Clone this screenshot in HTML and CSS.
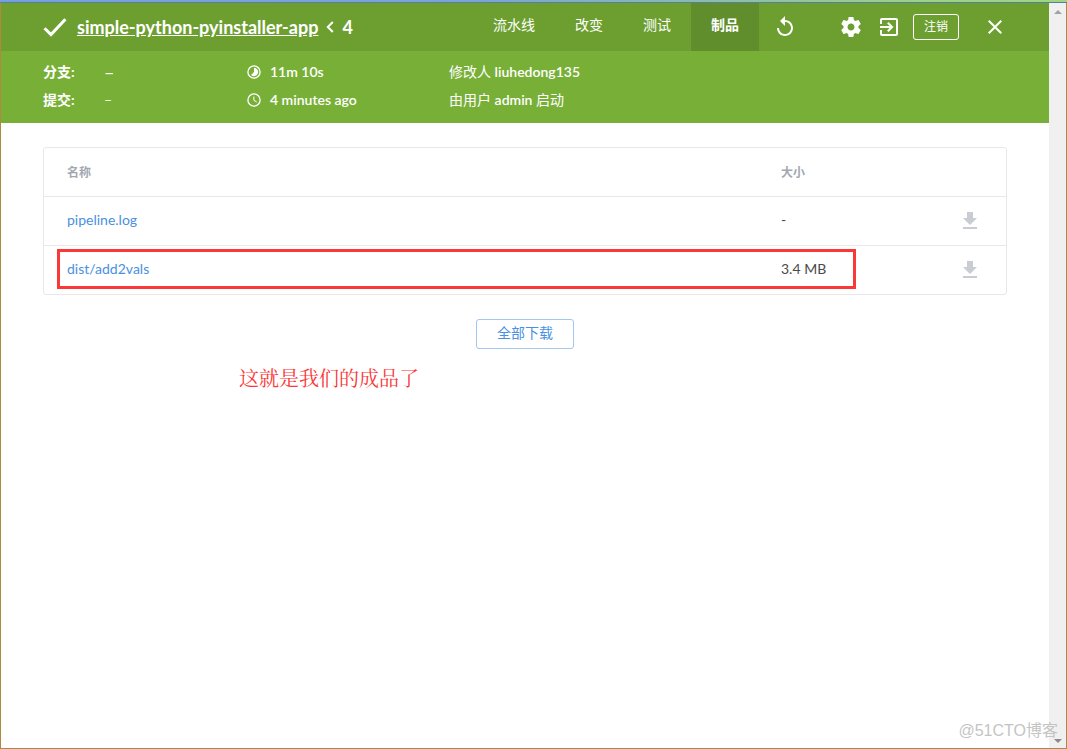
FILE: index.html
```html
<!DOCTYPE html>
<html lang="zh-CN">
<head>
<meta charset="utf-8">
<title>simple-python-pyinstaller-app</title>
<link rel="stylesheet" href="styles.css">
</head>
<body>
<div class="titlebar"></div>
<div class="window">
  <div class="page">
    <header class="topbar">
      <svg class="status-icon" viewBox="0 0 24 20" aria-hidden="true"><path d="M1.5 11.2L8 17.6L22.4 2.2" fill="none" stroke="#fff" stroke-width="3"/></svg>
      <h1 class="title"><a href="#">simple-python-pyinstaller-app</a>
        <svg class="chevron" viewBox="0 0 8 12" aria-hidden="true"><path d="M6.8 1L1.8 6L6.8 11" fill="none" stroke="#fff" stroke-width="2"/></svg>
        <span>4</span></h1>
      <nav class="tabs">
        <a href="#">流水线</a>
        <a href="#">改变</a>
        <a href="#">测试</a>
        <a href="#" class="active">制品</a>
      </nav>
      <button class="icon-button rerun" aria-label="Rerun"><svg viewBox="0 0 24 24"><path d="M12 5V1L7 6l5 5V7c3.31 0 6 2.69 6 6s-2.690 6-6 6-6-2.690-6-6H4c0 4.420 3.580 8 8 8s8-3.580 8-8-3.580-8-8-8z"/></svg></button>
      <button class="icon-button settings" aria-label="Settings"><svg viewBox="0 0 24 24"><path d="M19.430 12.980c.04-.32.07-.64.07-.98s-.03-.66-.07-.98l2.110-1.650c.19-.15.24-.42.12-.64l-2-3.460c-.12-.22-.39-.3-.61-.22l-2.490 1c-.52-.4-1.080-.73-1.690-.98l-.38-2.650C14.460 2.180 14.250 2 14 2h-4c-.25 0-.46.18-.49.42l-.38 2.650c-.61.25-1.170.59-1.690.98l-2.490-1c-.23-.09-.49 0-.61.22l-2 3.460c-.13.22-.07.49.12.64l2.110 1.650c-.04.32-.07.65-.07.98s.03.66.07.98l-2.110 1.650c-.19.15-.24.42-.12.64l2 3.460c.12.22.39.3.61.22l2.490-1c.52.4 1.080.73 1.690.98l.38 2.650c.03.24.24.42.49.42h4c.25 0 .46-.18.49-.42l.38-2.650c.61-.25 1.170-.59 1.690-.98l2.490 1c.23.09.49 0 .61-.22l2-3.460c.12-.22.07-.49-.12-.64l-2.110-1.650zM12 15.500c-1.930 0-3.500-1.570-3.500-3.500s1.570-3.500 3.500-3.500 3.500 1.570 3.500 3.500-1.570 3.500-3.500 3.500z"/></svg></button>
      <button class="icon-button" aria-label="Go to classic"><svg viewBox="0 0 24 24"><path d="M10.090 15.590L11.500 17l5-5-5-5-1.410 1.410L12.670 11H3v2h9.670l-2.580 2.590zM19 3H5c-1.110 0-2 .9-2 2v4h2V5h14v14H5v-4H3v4c0 1.100.89 2 2 2h14c1.100 0 2-.9 2-2V5c0-1.100-.9-2-2-2z"/></svg></button>
      <button class="logout">注销</button>
      <button class="icon-button close" aria-label="Close"><svg viewBox="0 0 24 24"><path d="M19 6.410L17.590 5 12 10.590 6.410 5 5 6.410 10.590 12 5 17.590 6.410 19 12 13.410 17.590 19 19 17.590 13.410 12z"/></svg></button>
    </header>
    <section class="details">
      <dl class="refs">
        <dt>分支:</dt><dd class="branch">–</dd>
        <dt>提交:</dt><dd>–</dd>
      </dl>
      <div class="times">
        <div class="time"><svg viewBox="0 0 14 14" aria-hidden="true"><circle cx="7" cy="7" r="6.100" fill="none" stroke="#fff" stroke-width="1.300"/><path d="M7 2.800A4.200 4.200 0 1 1 4 10L7 7z" fill="#fff"/></svg>11m 10s</div>
        <div class="time"><svg viewBox="0 0 14 14" aria-hidden="true"><circle cx="7" cy="7" r="6.100" fill="none" stroke="#fff" stroke-width="1.300"/><path d="M6.900 3.500V7.300L9.800 9.100" fill="none" stroke="#fff"/></svg>4 minutes ago</div>
      </div>
      <div class="causes">
        <div>修改人 <b>liuhedong135</b></div>
        <div>由用户 <b>admin</b> 启动</div>
      </div>
    </section>
    <main class="content">
      <div class="card">
        <table class="artifacts">
          <colgroup><col><col class="col-size"><col class="col-action"></colgroup>
          <thead><tr><th>名称</th><th>大小</th><th></th></tr></thead>
          <tbody>
            <tr><td><a href="#">pipeline.log</a></td><td>-</td><td class="action"><a class="download" href="#" aria-label="下载 pipeline.log"><svg viewBox="0 0 24 24"><path d="M19 9h-4V3H9v6H5l7 7 7-7zM5 18v2h14v-2H5z"/></svg></a></td></tr>
            <tr><td><a href="#">dist/add2vals</a></td><td>3.4 MB</td><td class="action"><a class="download" href="#" aria-label="下载 dist/add2vals"><svg viewBox="0 0 24 24"><path d="M19 9h-4V3H9v6H5l7 7 7-7zM5 18v2h14v-2H5z"/></svg></a></td></tr>
          </tbody>
        </table>
        <div class="highlight"></div>
      </div>
      <button class="download-all">全部下载</button>
      <p class="note">这就是我们的成品了</p>
    </main>
  </div>
  <div class="scrollbar"><span class="arrow up"></span><span class="arrow down"></span></div>
  <div class="watermark">@51CTO博客</div>
</div>
</body>
</html>
```
FILE: styles.css
```css
* { box-sizing: border-box; }
body {
  margin: 0;
  min-height: 100vh;
  display: flex;
  flex-direction: column;
  background: #fff;
  color: #4a4a4a;
  font: 14px/20px Lato, "Noto Sans CJK SC", sans-serif;
}
button { font: inherit; cursor: pointer; }
.titlebar {
  height: 3px;
  background: linear-gradient(90deg, #74a0e0, #7aa4d8 45%, #9ad08c 85%, #9fd685);
  border-bottom: 1px solid #5a7f94;
}
.window {
  position: relative;
  flex: 1;
  display: flex;
  border: solid #b08a3c;
  border-width: 0 1px 1px;
}
.page { flex: 1; min-width: 0; }

.topbar {
  display: flex;
  align-items: center;
  height: 48px;
  padding: 0 42px;
  background: #6d9f30;
  color: #fff;
}
.status-icon { width: 24px; height: 20px; margin-right: 10px; }
.title {
  display: flex;
  align-items: center;
  gap: 8px;
  margin: 0;
  font-size: 18px;
  line-height: 24px;
  font-weight: 700;
  white-space: nowrap;
}
.title a { color: #fff; text-decoration: underline; }
.chevron { width: 8px; height: 12px; }
.tabs { display: flex; align-self: stretch; margin-left: auto; }
.tabs a {
  padding: 0 20px;
  line-height: 44px;
  color: #fff;
  text-decoration: none;
  white-space: nowrap;
}
.tabs .active { background: #608e2c; font-weight: 700; }
.icon-button {
  flex: none;
  width: 24px;
  height: 24px;
  padding: 0;
  border: 0;
  background: none;
}
.icon-button svg { display: block; width: 24px; height: 24px; fill: #fff; }
.rerun { margin-left: 14px; }
.settings { margin: 0 14px 0 42px; }
.close { margin-left: 24px; }
.logout {
  flex: none;
  width: 46px;
  height: 26px;
  margin-left: 12px;
  padding: 0;
  border: 1px solid #fff;
  border-radius: 3px;
  background: none;
  color: #fff;
  font-size: 12px;
}

.details {
  display: grid;
  grid-template-columns: 204px 202px 1fr;
  padding: 7px 42px 9px;
  background: #78b037;
  color: #fff;
  line-height: 28px;
}
.refs { display: grid; grid-template-columns: 61px 1fr; margin: 0; }
.refs dt { font-weight: 700; }
.refs dd { margin: 0; }
.refs .branch { font-size: 18px; }
.time { display: flex; align-items: center; gap: 9px; }
.time svg { width: 14px; height: 14px; }
.time, .causes b { font-weight: 600; }

.content { position: relative; padding: 24px 42px; text-align: center; }
.card {
  position: relative;
  border: 1px solid #e6e8eb;
  border-radius: 3px;
  text-align: left;
}
.artifacts { width: 100%; table-layout: fixed; border-collapse: collapse; }
.col-size { width: 177px; }
.col-action { width: 72px; }
.artifacts th, .artifacts td { height: 49px; padding: 0 23px 2px; }
.artifacts th {
  height: 48px;
  padding: 2px 23px 0;
  color: #a3a8b0;
  font-size: 12px;
  font-weight: 700;
  text-align: left;
}
.artifacts th + th, .artifacts td + td { padding-left: 24px; }
.artifacts .action { padding: 0 24px; }
.artifacts tbody tr { border-top: 1px solid #e6e8eb; }
.artifacts a { color: #4a90e2; text-decoration: none; }
.download svg { display: block; width: 24px; height: 24px; fill: #c9cdd3; }
.highlight {
  position: absolute;
  left: 13px;
  right: 150px;
  bottom: 5px;
  height: 40px;
  border: 3px solid #fb3838;
}
.download-all {
  width: 98px;
  height: 30px;
  margin-top: 24px;
  padding: 0 0 2px;
  border: 1px solid #a4c7f0;
  border-radius: 3px;
  background: #fff;
  color: #4a90e2;
}
.note {
  position: absolute;
  left: 238px;
  top: 243px;
  margin: 0;
  color: #fb3838;
  font: 400 20px/24px "Noto Serif CJK SC", "Noto Sans CJK SC", serif;
}

.scrollbar {
  flex: none;
  width: 17px;
  padding: 7px 0 5px;
  display: flex;
  flex-direction: column;
  align-items: center;
  justify-content: space-between;
  background: #f0f0f0;
}
.arrow { border: 4px solid transparent; }
.up { border-top: 0; border-bottom-color: #a3a3a3; }
.down { border-bottom: 0; border-top-color: #8a8a8a; }
.watermark {
  position: absolute;
  right: 8px;
  bottom: 5px;
  color: #c4c4c4;
  font: 16px/24px "Liberation Sans", "Noto Sans CJK SC", sans-serif;
}
```
